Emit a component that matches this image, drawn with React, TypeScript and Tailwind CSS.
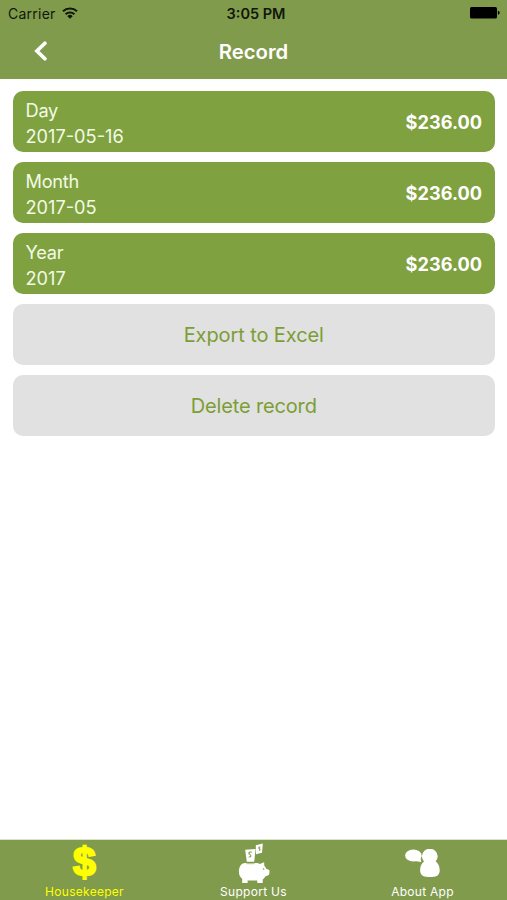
import React from 'react';

type RecordRow = {
  label: string;
  value: string;
  amount: string;
};

const rows: RecordRow[] = [
  { label: 'Day', value: '2017-05-16', amount: '$236.00' },
  { label: 'Month', value: '2017-05', amount: '$236.00' },
  { label: 'Year', value: '2017', amount: '$236.00' },
];

const WifiIcon: React.FC = () => (
  <svg width="16" height="12" viewBox="0 0 16 12" fill="none" stroke="#10170a" strokeWidth="2.1">
    <path d="M1 4.3a10.2 10.2 0 0 1 14 0" />
    <path d="M3.6 7.2a6.4 6.4 0 0 1 8.8 0" />
    <path d="M8 11.8 5.3 9.2a3.8 3.8 0 0 1 5.4 0Z" fill="#10170a" stroke="none" />
  </svg>
);

const BatteryIcon: React.FC = () => (
  <svg width="30" height="12" viewBox="0 0 30 12" fill="#000">
    <rect x="0" y="0" width="27" height="11.5" rx="1.6" />
    <path d="M27.9 3.8c2.3.5 2.3 3.4 0 3.9Z" />
  </svg>
);

const PiggyIcon: React.FC = () => (
  <svg width="34" height="42" viewBox="1 0 34 42" fill="#fff">
    <path d="m19.8 2.2 7-1.6-.8 9.2-6 1.4Z" />
    <path d="m9.2 6.8 10.4-.8-1.4 12.8h-7.4Z" />
    <path d="M24.4 4.2c-1.2-.5-2.3.5-1.2 1.3s1.3 1.6-.3 2M15.8 9.3c-2.2-1-4 .8-2.1 2.1s1.4 2.9-1 2.6" fill="none" stroke="#819b4d" strokeWidth="1.1" />
    <path d="M4.2 23c1-2 2.8-3 5.1-3h11.2c1.3 0 2.3.4 3.2 1.1l4.4-1.8.2 3.4c1 .9 1.6 1.9 1.9 3l3.1 1.4c.4 2.1.2 3.7-.5 5l-3.5 1.3c-.8 1.4-1.6 2.3-2.6 3V40h-5.4v-2.6H11.6V40H6.2v-4.2c-2-1.5-3.3-3.8-3.3-7.3 0-2 .4-3.8 1.3-5.5Z" />
    <path d="M10.5 20.7h8" stroke="#a9bd83" strokeWidth="1" />
    <circle cx="27.6" cy="26" r=".8" fill="#819b4d" />
  </svg>
);

const PersonIcon: React.FC = () => (
  <svg width="36" height="30" viewBox="0.5 0 36 30" fill="#fff">
    <ellipse cx="8.9" cy="6.4" rx="8.3" ry="6" />
    <path d="m10 12 6.8 1-.9-4.2Z" />
    <ellipse cx="25.3" cy="7.3" rx="7.9" ry="7.6" />
    <path d="M20 12h10.8c2.7 2 4.4 5.2 4.4 9.2 0 4.2-2.5 6.7-7.7 6.7h-4c-5.3 0-7.9-2.5-7.9-6.7 0-4 1.7-7.2 4.4-9.2Z" />
  </svg>
);

const Header: React.FC = () => (
  <header className="h-[79px] bg-[#819b4d]">
    <div className="flex h-[26px] items-center justify-between pl-[8px] pr-[7px] text-[14px] text-[#10170a]">
      <div className="flex flex-1 items-center gap-[6px]">
        <span className="pt-px tracking-[0.25px]">Carrier</span>
        <WifiIcon />
      </div>
      <span className="pl-[4px] pt-px text-[14.5px] font-semibold">3:05 PM</span>
      <div className="flex flex-1 justify-end">
        <BatteryIcon />
      </div>
    </div>
    <div className="grid h-[52px] grid-cols-[80px_1fr_80px] items-center">
      <button type="button" aria-label="Back" className="pb-[3px] pl-[34px]">
        <svg width="14" height="20" viewBox="0 0 14 20" fill="none" stroke="#fff" strokeWidth="3.7" strokeLinecap="round">
          <path d="M10.9 2.2 2.9 10l8 7.8" />
        </svg>
      </button>
      <h1 className="pt-px text-center text-[20.3px] font-semibold text-white">Record</h1>
    </div>
  </header>
);

const TabBar: React.FC = () => (
  <nav className="grid h-[60px] grid-cols-3 bg-[#819b4d] text-[12px] leading-[14px] tracking-[0.28px] text-white">
    <button type="button" className="flex flex-col items-center justify-between pb-[1px] text-[#ffff00]">
      <span className="h-[43px] font-['Liberation_Sans'] text-[41px] font-bold leading-[44px] tracking-normal [-webkit-text-stroke:2px_#ffff00]">$</span>
      <span>Housekeeper</span>
    </button>
    <button type="button" className="flex flex-col items-center justify-between pb-[1px] pt-[3px]">
      <PiggyIcon />
      <span>Support Us</span>
    </button>
    <button type="button" className="flex flex-col items-center justify-between pb-[1px] pt-[9px]">
      <PersonIcon />
      <span>About App</span>
    </button>
  </nav>
);

const App: React.FC = () => (
  <div className="flex h-[900px] w-[507px] flex-col bg-white font-[Inter,sans-serif]">
    <Header />
    <main className="flex flex-1 flex-col gap-[10px] border-b border-[#d9e1c9] pl-[13px] pr-[12.5px] pt-3">
      {rows.map((row) => (
        <section key={row.label} className="flex h-[61px] items-center justify-between rounded-[10px] bg-[#80a140] px-[12.5px] text-[18.2px] text-[#f1fbe5]">
          <div className="pt-[3px] leading-[26px]">
            <p className="tracking-[-0.25px]">{row.label}</p>
            <p>{row.value}</p>
          </div>
          <span className="pt-[2px] text-[18.2px] font-bold text-white">{row.amount}</span>
        </section>
      ))}
      <button type="button" className="h-[61px] rounded-[10px] bg-[#e1e1e1] text-[20px] tracking-[-0.1px] text-[#7b9e35]">
        Export to Excel
      </button>
      <button type="button" className="h-[61px] rounded-[10px] bg-[#e1e1e1] text-[20px] tracking-[-0.15px] text-[#7b9e35]">
        Delete record
      </button>
    </main>
    <TabBar />
  </div>
);

export default App;
